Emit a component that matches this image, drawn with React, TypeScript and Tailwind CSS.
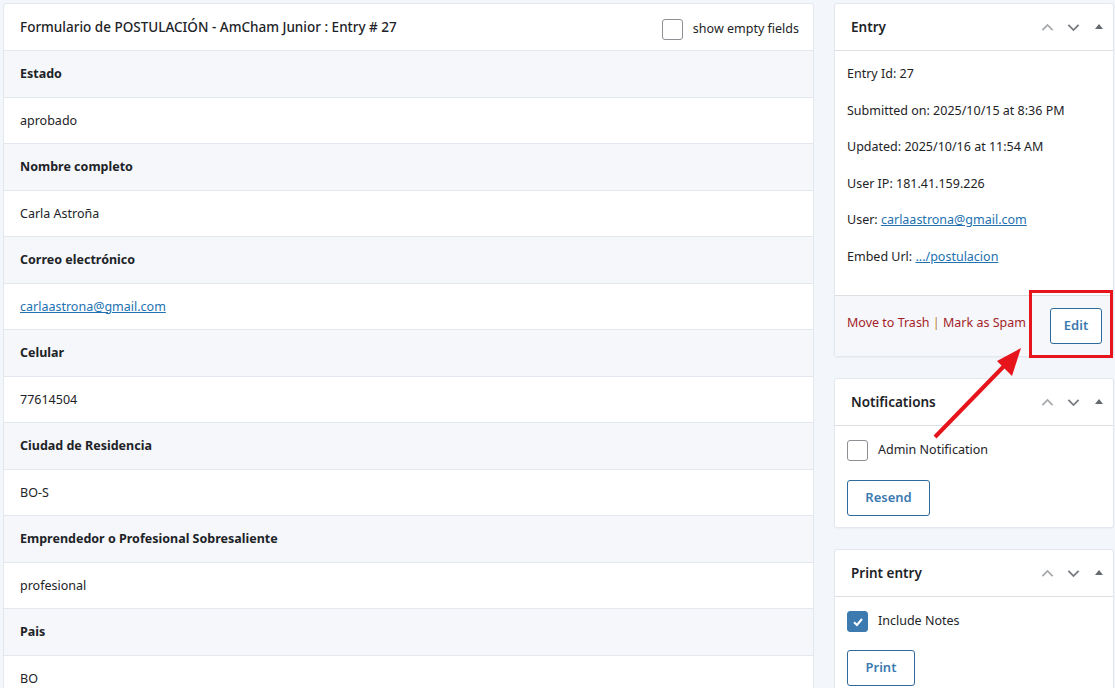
import React from 'react';

const ROWS = [
  { label: 'Estado', value: 'aprobado' },
  { label: 'Nombre completo', value: 'Carla Astroña' },
  { label: 'Correo electrónico', value: 'carlaastrona@gmail.com', link: true },
  { label: 'Celular', value: '77614504' },
  { label: 'Ciudad de Residencia', value: 'BO-S' },
  { label: 'Emprendedor o Profesional Sobresaliente', value: 'profesional' },
  { label: 'Pais', value: 'BO' },
];

const font = { fontFamily: '"Noto Sans", "Liberation Sans", sans-serif' };

const BoxControls = () => (
  <div className="flex items-center gap-[9px] pr-[8px]">
    <svg width="17" height="17" viewBox="0 0 20 20" className="text-[#a7aaad]">
      <path d="M4 13 L10 7 L16 13" fill="none" stroke="currentColor" strokeWidth="2.2" />
    </svg>
    <svg width="17" height="17" viewBox="0 0 20 20" className="text-[#787c82]">
      <path d="M4 7 L10 13 L16 7" fill="none" stroke="currentColor" strokeWidth="2.2" />
    </svg>
    <svg width="12" height="12" viewBox="0 0 12 12" className="ml-[2px] text-[#646970]">
      <path d="M2 8 L6 3 L10 8 Z" fill="currentColor" />
    </svg>
  </div>
);

const Checkbox = ({ checked }: { checked?: boolean }) => (
  <span
    className={`flex h-[21px] w-[21px] shrink-0 items-center justify-center rounded-[3px] border ${
      checked ? 'border-[#3d7ab0] bg-[#3d7ab0]' : 'border-[#8c8f94] bg-white'
    }`}
  >
    {checked && (
      <svg width="14" height="14" viewBox="0 0 14 14">
        <path d="M3 7.2 L6 10 L11 4" fill="none" stroke="white" strokeWidth="2" />
      </svg>
    )}
  </span>
);

const OutlineButton = ({ children, w }: { children: React.ReactNode; w: string }) => (
  <button
    className={`${w} h-[36px] rounded-[3px] border border-[#2c6a9e] bg-white text-[13px] font-semibold text-[#3b7ab0]`}
  >
    {children}
  </button>
);

const SideCard = ({ title, children }: { title: string; children: React.ReactNode }) => (
  <div className="rounded-[3px] border border-[#e3e7ee] bg-white shadow-[0_1px_2px_rgba(0,0,0,0.04)]">
    <div className="flex h-[47px] items-center justify-between border-b border-[#dcdfe4] pl-[16px]">
      <span className="text-[13.5px] font-semibold text-[#1d2327]">{title}</span>
      <BoxControls />
    </div>
    {children}
  </div>
);

export default function App() {
  return (
    <div className="relative h-[688px] w-[1115px] overflow-hidden bg-[#f3f6fa] text-[#1d2327]" style={font}>
      <div className="flex gap-[20px] pl-[3px] pt-[3px]">
        {/* main entry table */}
        <div className="w-[811px] shrink-0 rounded-[3px] border border-[#e3e7ee] bg-white">
          <div className="flex h-[47px] items-center justify-between border-b border-[#e3e7ee] pl-[16px] pr-[14px]">
            <span className="text-[13.5px] font-medium text-[#1d2327]">
              Formulario de POSTULACIÓN - AmCham Junior : Entry # 27
            </span>
            <label className="mt-[4px] flex items-center gap-[10px] text-[12.5px] text-[#1d2327]">
              <Checkbox />
              show empty fields
            </label>
          </div>
          {ROWS.map((r) => (
            <React.Fragment key={r.label}>
              <div className="flex h-[47px] items-center border-b border-[#e3e7ee] bg-[#f5f7fb] pl-[16px] pt-[1px] text-[12.5px] font-bold">
                {r.label}
              </div>
              <div className="flex h-[46px] items-center border-b border-[#e3e7ee] pl-[16px] pt-[1px] text-[12.5px]">
                {r.link ? <a className="text-[#2271b1] underline">{r.value}</a> : r.value}
              </div>
            </React.Fragment>
          ))}
        </div>

        {/* side column */}
        <div className="flex w-[280px] shrink-0 flex-col gap-[21px]">
          <SideCard title="Entry">
            <div className="flex flex-col gap-[18px] px-[12px] pb-[29px] pt-[14px] text-[12.5px]">
              <div className="h-[18.5px] leading-[18.5px]">Entry Id: 27</div>
              <div className="h-[18.5px] leading-[18.5px]">Submitted on: 2025/10/15 at 8:36 PM</div>
              <div className="h-[18.5px] leading-[18.5px]">Updated: 2025/10/16 at 11:54 AM</div>
              <div className="h-[18.5px] leading-[18.5px]">User IP: 181.41.159.226</div>
              <div className="h-[18.5px] leading-[18.5px]">
                User: <a className="text-[#2271b1] underline">carlaastrona@gmail.com</a>
              </div>
              <div className="h-[18.5px] leading-[18.5px]">
                Embed Url: <a className="text-[#2271b1] underline">.../postulacion</a>
              </div>
            </div>
            <div className="flex h-[61px] items-center justify-between border-t border-[#dcdfe4] bg-[#f6f7fa] pl-[12px] pr-[11px] text-[12.5px] text-[#a41e2a]">
              <span className="mb-[5px]">
                Move to Trash <span className="text-[#b8823a]">|</span> Mark as Spam
              </span>
              <OutlineButton w="w-[52px]">Edit</OutlineButton>
            </div>
          </SideCard>

          <SideCard title="Notifications">
            <div className="flex flex-col gap-[19px] px-[12px] pb-[11px] pt-[14px]">
              <label className="flex items-center gap-[10px] text-[12.5px]">
                <Checkbox />
                Admin Notification
              </label>
              <OutlineButton w="w-[83px]">Resend</OutlineButton>
            </div>
          </SideCard>

          <SideCard title="Print entry">
            <div className="flex flex-col gap-[18px] px-[12px] pb-[12px] pt-[14px]">
              <label className="flex items-center gap-[10px] text-[12.5px]">
                <Checkbox checked />
                Include Notes
              </label>
              <OutlineButton w="w-[68px]">Print</OutlineButton>
            </div>
          </SideCard>
        </div>
      </div>

      {/* annotation overlay */}
      <div className="pointer-events-none absolute left-[1029px] top-[290px] h-[68px] w-[84px] border-[3px] border-[#e6151b]" />
      <svg className="pointer-events-none absolute left-0 top-0" width="1115" height="688">
        <line x1="935" y1="437" x2="1006" y2="364" stroke="#e6151b" strokeWidth="4" />
        <polygon points="1021,348 997,361 1012,376" fill="#e6151b" />
      </svg>
    </div>
  );
}
